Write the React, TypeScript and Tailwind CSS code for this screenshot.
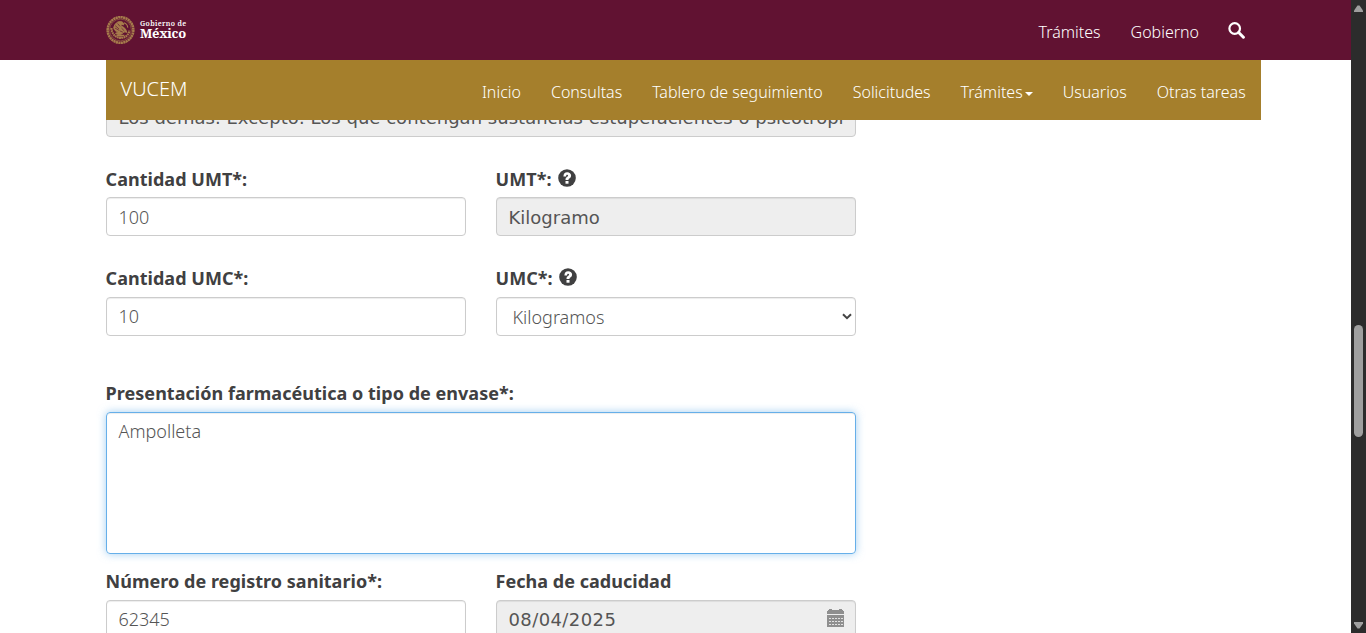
import type { ReactNode } from 'react';

const label = 'flex h-[26px] items-center whitespace-nowrap pb-[2px] text-[18px] leading-[24px] font-bold tracking-[.025px] text-[#404041]';
const box = 'flex h-[39px] items-center rounded-[4px] border border-[#ccc] px-3 pl-[11.5px] text-[18px] whitespace-nowrap shadow-[inset_0_1px_1px_rgba(0,0,0,0.075)]';
const editable = 'bg-white font-light text-[#555]';
const disabled = "bg-[#eee] font-['Verdana','DejaVu_Sans',sans-serif] font-normal text-[#555]";

function Help() {
  return (
    <svg className="ml-[6px] -mt-[3px] h-[18px] w-[18px]" viewBox="0 0 18 18">
      <circle cx="9" cy="9" r="8.8" fill="#404041" />
      <path d="M5.4 7.500C5.400 4.600 6.900 3.200 9.200 3.200c2.300 0 3.900 1.300 3.900 3.300 0 1.700-.9 2.400-1.700 2.900-.7.400-.9.700-.9 1.500H7.500c0-1.800.5-2.400 1.500-3 .8-.5 1.100-.8 1.100-1.400 0-.5-.4-.8-.9-.8-.8 0-1.100.6-1.100 1.800z" fill="#fff" />
      <rect x="7.500" y="12" width="3" height="2.700" fill="#fff" />
    </svg>
  );
}

function Seal() {
  return (
    <svg className="-mt-px h-[30px] w-[29px]" viewBox="0 0 30 30" fill="none" stroke="#a67c4c">
      <circle cx="15" cy="15" r="13.300" strokeWidth="2.600" strokeDasharray="2.200 .4" />
      <circle cx="15" cy="15" r="11.300" strokeWidth=".8" opacity=".7" />
      <path d="M5.600 13c.2 5.600 3.800 9.800 9.400 10.200 5.200-.2 8.400-3.200 9.200-7.500" strokeWidth="2.200" strokeDasharray="1.800 .5" />
      <path d="M8 12.500c1-4 4-6.700 7.200-6.200 2.300.3 3.400 1.700 3 3.400l-1.800-.5-1.200 1.600c3.500 1 5.700 3.300 6.300 6.700-2-.8-3.200-.5-4.200.8-2.300 1.900-5 1.700-7.500.2 1.300-.3 2.100-.8 2.500-1.700-2.600-.3-4-1.900-4.300-4.300z" fill="#a67c4c" strokeWidth="1" />
      <path d="M9.500 10.500l4 3.400M9.300 13l4.500 2.500M12 8.300l2.500 3M16 13l3 3M14.500 16l3 1.300" stroke="#611232" strokeWidth=".7" />
      <path d="M18.500 7.500c2.300.7 3.800 2.700 4 5M11 20.500h8M13 22.300h4" strokeWidth="1.200" />
    </svg>
  );
}

function Calendar() {
  return (
    <svg className="mb-[3px] h-[18px] w-[17px]" viewBox="0 0 17 18" shapeRendering="crispEdges">
      <path d="M1 1h1V0h3v1h7V0h3v1h1v1h1v3H0V2h1z" fill="#8f8f8f" />
      <path d="M0 6h17v12H0z" fill="#8f8f8f" />
      <path d="M2 9.500h14M2 12.500h14M2 15.500h14" stroke="#e2e2e2" strokeWidth="1" strokeDasharray="2 1" />
    </svg>
  );
}

function Field({ name, children, help }: { name: string; children: ReactNode; help?: boolean }) {
  return (
    <div className="w-[360px]">
      <div className={label}><span className="-ml-[.4px]">{name}</span>{help && <Help />}</div>
      {children}
    </div>
  );
}

export default function App() {
  return (
    <div className="flex h-[633px] w-[1366px] overflow-hidden bg-white font-['Noto_Sans','Open_Sans',sans-serif]">
      <div className="flex w-[1351px] flex-col">
        <header className="flex h-[60px] shrink-0 items-center justify-between bg-[#611232] pr-[105px] pl-[106px] text-white">
          <div className="flex items-center gap-[5px]">
            <Seal />
            <div className="flex flex-col pb-px font-['Noto_Serif','Liberation_Serif',serif]">
              <span className="text-[7px] leading-[8px] font-semibold tracking-[.35px]">Gobierno de</span>
              <span className="text-[13px] leading-[11px] font-bold tracking-[-.3px]">México</span>
            </div>
          </div>
          <nav className="flex items-center pt-1 text-[16px] font-light">
            <span className="mr-[30px]">Trámites</span>
            <span className="mr-[29px]">Gobierno</span>
            <svg className="mr-px -mt-[3px] h-[17px] w-[17px]" viewBox="0 0 17 17" fill="none" stroke="#fff">
              <circle cx="6.700" cy="6.500" r="5.300" strokeWidth="2.200" />
              <path d="M10.700 10.500l4.700 4.700" strokeWidth="3" strokeLinecap="round" />
            </svg>
          </nav>
        </header>

        <div className="ml-[106px] flex h-[60px] w-[1155px] shrink-0 justify-between bg-[#a57f2c] pr-[15.300px] pl-[14.500px] text-white">
          <span className="pt-[14px] text-[20px] leading-[30px] font-light">VUCEM</span>
          <nav className="flex gap-[30px] pt-5 text-[16px] leading-6 font-light">
            <span>Inicio</span>
            <span>Consultas</span>
            <span>Tablero de seguimiento</span>
            <span>Solicitudes</span>
            <span className="flex h-6 items-center">
              Trámites
              <svg className="mt-[4px] ml-[2px] h-1 w-2" viewBox="0 0 8 4"><path d="M0 0h8L4 4z" fill="#fff" /></svg>
            </span>
            <span>Usuarios</span>
            <span>Otras tareas</span>
          </nav>
        </div>

        <main className="ml-[106px] w-[750px]">
          <div className="flex h-[17px] items-end overflow-hidden">
            <div className={`${box} ${disabled} w-full shrink-0`}>
              <span className="tracking-[.02px]">Los demás. Excepto: Los que contengan sustancias estupefacientes o psicotrópi</span>
            </div>
          </div>

          <div className="mt-[30px] flex justify-between">
            <Field name="Cantidad UMT*:"><div className={`${box} ${editable} mt-1 pt-[2px]`}>100</div></Field>
            <Field name="UMT*:" help><div className={`${box} ${disabled} mt-1 pt-[2px]`}>Kilogramo</div></Field>
          </div>

          <div className="mt-[30px] flex justify-between">
            <Field name="Cantidad UMC*:"><div className={`${box} ${editable} mt-[5px]`}>10</div></Field>
            <Field name="UMC*:" help>
              <div className={`${box} ${editable} mt-[5px] justify-between pr-[3px]`}>
                <span className="pt-[2px] pl-1">Kilogramos</span>
                <svg className="h-[7px] w-[10px]" viewBox="0 0 10 7" fill="none"><path d="M1 1.200l4 4 4-4" stroke="#444" strokeWidth="2" /></svg>
              </div>
            </Field>
          </div>

          <div className="mt-[45px]">
            <div className={label}><span className="-ml-[.4px]">Presentación farmacéutica o tipo de envase*:</span></div>
            <div className="mt-[5px] h-[142px] rounded-[4px] border border-[#66afe9] px-[11.500px] pt-[5px] text-[18px] leading-[26px] font-light text-[#555] shadow-[inset_0_1px_1px_rgba(0,0,0,0.075),0_0_8px_rgba(102,175,233,0.6)]">Ampolleta</div>
          </div>

          <div className="mt-[15px] flex justify-between">
            <Field name="Número de registro sanitario*:"><div className={`${box} ${editable} mt-[5px]`}>62345</div></Field>
            <Field name="Fecha de caducidad">
              <div className={`${box} ${disabled} mt-[5px] justify-between pr-[11px]`}><span className="tracking-[.4px]">08/04/2025</span><Calendar /></div>
            </Field>
          </div>
        </main>
      </div>

      <div className="flex w-[15px] shrink-0 flex-col items-center bg-[#2c2c2c]">
        <svg className="mt-[5px] h-[7px] w-[9px]" viewBox="0 0 9 7"><path d="M3.500.5h2L9 5.500V7H0V5.500z" fill="#9f9f9f" /></svg>
        <div className="mt-[313px] h-[112px] w-[9px] rounded-full bg-[#9f9f9f]" />
        <svg className="mt-[185px] h-[7px] w-[9px]" viewBox="0 0 9 7"><path d="M0 0h9v1.500L5.500 6.500h-2L0 1.500z" fill="#9f9f9f" /></svg>
      </div>
    </div>
  );
}
